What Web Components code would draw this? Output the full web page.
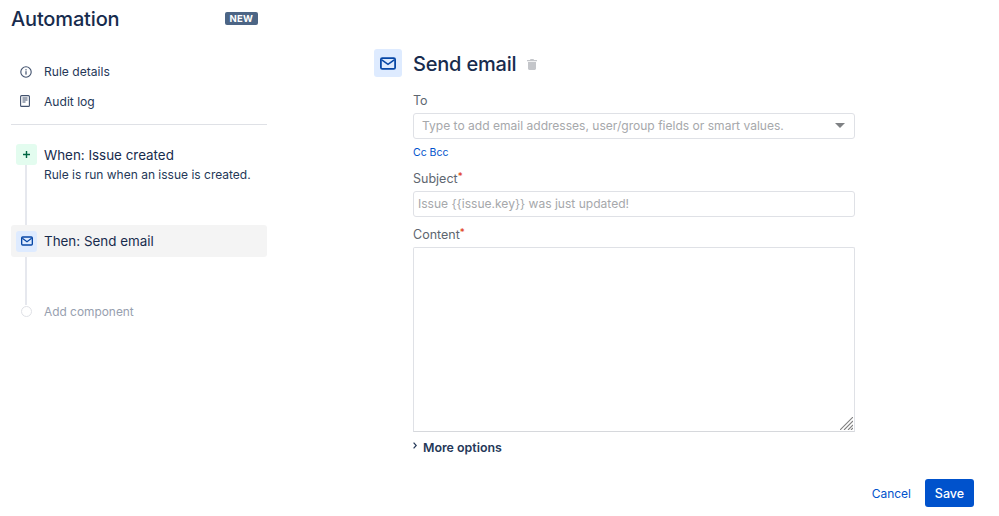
<!DOCTYPE html>
<html>
<head>
<meta charset="utf-8">
<title>Automation</title>
<style>
  html, body { margin: 0; background: #fff; }
  body { font-family: Inter, "Noto Sans", sans-serif; color: #172b4d; }
</style>
</head>
<body>
<rule-editor>
  <rule-sidebar slot="side">
    <nav-link label="Rule details" icon="info"></nav-link>
    <nav-link label="Audit log" icon="doc"></nav-link>
    <rule-step slot="steps" kind="trigger" title="When: Issue created" desc="Rule is run when an issue is created."></rule-step>
    <rule-step slot="steps" kind="action" title="Then: Send email" selected></rule-step>
    <rule-step slot="steps" kind="add" title="Add component"></rule-step>
  </rule-sidebar>
  <email-form slot="main"></email-form>
</rule-editor>

<script>
const ICONS = {
  mail: '<svg viewBox="0 0 18 14" width="100%" height="100%"><rect x="1" y="1" width="16" height="12" rx="1.6" fill="none" stroke="#0747a6" stroke-width="2"/><path d="M2 3l7 5 7-5" fill="none" stroke="#0747a6" stroke-width="1.8"/></svg>',
  info: '<svg viewBox="0 0 12 12" width="12" height="12"><circle cx="6" cy="6" r="5.2" fill="none" stroke="#42526e" stroke-width="1.1"/><rect x="5.4" y="5.2" width="1.2" height="3.4" fill="#42526e"/><rect x="5.4" y="3.2" width="1.2" height="1.2" fill="#42526e"/></svg>',
  doc: '<svg viewBox="0 0 10 12" width="10" height="12"><rect x=".6" y=".6" width="8.8" height="10.8" rx="1" fill="none" stroke="#42526e" stroke-width="1.1"/><path d="M2.5 3h5M2.5 5h5M2.5 7h3" stroke="#42526e" stroke-width="1.1"/></svg>',
  plus: '<svg viewBox="0 0 9 9" width="9" height="9"><path d="M4.5 1v7M1 4.5h7" stroke="#006644" stroke-width="1.4"/></svg>',
  trash: '<svg viewBox="0 0 10 12" width="10" height="12"><path d="M3.5 1h3l.5 1h3v1.2H0V2h3zM1 4h8v6.6c0 .8-.6 1.4-1.4 1.4H2.4C1.6 12 1 11.4 1 10.6z" fill="#c4c6ca"/></svg>'
};

class RuleEditor extends HTMLElement {
  constructor() {
    super();
    this.attachShadow({ mode: 'open' });
    this.shadowRoot.innerHTML = `
      <style>
        :host { display: flex; width: 999px; height: 516px; overflow: hidden; box-sizing: border-box; padding-left: 11px; }
        .side { flex: 0 0 256px; }
        .main { flex: 1; padding-left: 107px; min-width: 0; }
      </style>
      <div class="side"><slot name="side"></slot></div>
      <div class="main"><slot name="main"></slot></div>
    `;
  }
}

class RuleSidebar extends HTMLElement {
  constructor() {
    super();
    this.attachShadow({ mode: 'open' });
    this.shadowRoot.innerHTML = `
      <style>
        :host { display: block; }
        header { display: flex; justify-content: space-between; align-items: center; height: 38px; }
        h1 { margin: 0; font-size: 20px; font-weight: 500; letter-spacing: -0.15px; color: #172b4d; }
        .badge { margin-right: 9px; margin-top: -2px; background: #4c6585; color: #fff; font-size: 9.5px; font-weight: 700; line-height: 13px; height: 13px; padding: 0 5px; border-radius: 2px; letter-spacing: .2px; }
        .links { padding-top: 19px; padding-bottom: 8px; border-bottom: 1px solid #dfe1e6; }
        .steps { position: relative; padding-top: 19px; }
        .rail { position: absolute; left: 14px; top: 30px; height: 150px; width: 2px; background: #e6e8ee; }
      </style>
      <header><h1>Automation</h1><span class="badge">NEW</span></header>
      <div class="links"><slot></slot></div>
      <div class="steps"><div class="rail"></div><slot name="steps"></slot></div>
    `;
  }
}

class NavLink extends HTMLElement {
  constructor() {
    super();
    this.attachShadow({ mode: 'open' });
    this.shadowRoot.innerHTML = `
      <style>
        :host { display: flex; align-items: center; height: 29.5px; font-size: 12.1px; color: #253858; }
        .icon { width: 33px; padding-left: 9px; box-sizing: border-box; display: flex; }
      </style>
      <span class="icon"></span><span class="text"></span>
    `;
  }
  connectedCallback() {
    this.shadowRoot.querySelector('.icon').innerHTML = ICONS[this.getAttribute('icon')] || '';
    this.shadowRoot.querySelector('.text').textContent = this.getAttribute('label') || '';
  }
}

class RuleStep extends HTMLElement {
  constructor() {
    super();
    this.attachShadow({ mode: 'open' });
    this.shadowRoot.innerHTML = `
      <style>
        :host { display: flex; position: relative; box-sizing: border-box; border-radius: 3px; font-size: 13.4px; color: #172b4d; }
        :host([kind="trigger"]) { height: 81px; }
        :host([kind="trigger"]) .copy { padding-top: 1px; }
        :host([kind="action"]) { height: 32px; align-items: center; margin-bottom: 44px; }
        :host([selected]) { background: #f4f4f4; }
        :host([kind="add"]) { height: 20px; align-items: center; color: #97a0af; font-size: 11.9px; }
        .icon { flex: 0 0 21px; height: 21px; margin: 0 7px 0 5px; border-radius: 3px; display: flex; align-items: center; justify-content: center; position: relative; }
        :host([kind="trigger"]) .icon { background: #e3fcef; }
        :host([kind="action"]) .icon { background: #deebff; }
        :host([kind="action"]) .icon svg { width: 12px; height: 10px; }
        :host([kind="add"]) .icon::after { content: ''; width: 9px; height: 9px; border: 1px solid #dfe1e6; border-radius: 50%; background: #fff; }
        .title { line-height: 21px; }
        .desc { font-size: 12px; color: #253858; line-height: 17px; }
      </style>
      <span class="icon"></span>
      <div class="copy"><div class="title"></div><div class="desc"></div></div>
    `;
  }
  connectedCallback() {
    const kind = this.getAttribute('kind');
    const icon = this.shadowRoot.querySelector('.icon');
    if (kind === 'trigger') icon.innerHTML = ICONS.plus;
    if (kind === 'action') icon.innerHTML = ICONS.mail;
    this.shadowRoot.querySelector('.title').textContent = this.getAttribute('title') || '';
    const desc = this.shadowRoot.querySelector('.desc');
    if (this.getAttribute('desc')) desc.textContent = this.getAttribute('desc');
    else desc.remove();
  }
}

class FormField extends HTMLElement {
  constructor() {
    super();
    this.attachShadow({ mode: 'open' });
    this.shadowRoot.innerHTML = `
      <style>
        :host { display: block; }
        label { display: block; font-size: 12.5px; line-height: 16px; color: #5e6670; padding-top: 1px; margin-bottom: 4px; }
        .req { color: #de350b; font-size: 10px; vertical-align: 3px; line-height: 0; display: none; }
        :host([required]) .req { display: inline; }
      </style>
      <label><span class="text"></span><span class="req">*</span></label>
      <slot></slot>
    `;
  }
  connectedCallback() {
    this.shadowRoot.querySelector('.text').textContent = this.getAttribute('label') || '';
  }
}

class TextBox extends HTMLElement {
  constructor() {
    super();
    this.attachShadow({ mode: 'open' });
    this.shadowRoot.innerHTML = `
      <style>
        :host { display: flex; align-items: center; justify-content: space-between; box-sizing: border-box; height: 26px; border: 1px solid #dfe1e6; border-radius: 3px; padding: 0 9px 2px 4px; font-size: 12.05px; color: #a6a8ab; background: #fff; }
        :host([select]) { padding-left: 8px; padding-right: 9px; }
        .caret { display: none; width: 0; height: 0; border: 5px solid transparent; border-top: 5px solid #7f8184; border-bottom: 0; }
        :host([select]) .caret { display: block; }
      </style>
      <span class="ph"></span><span class="caret"></span>
    `;
  }
  connectedCallback() {
    this.shadowRoot.querySelector('.ph').textContent = this.getAttribute('placeholder') || '';
  }
}

class TextArea extends HTMLElement {
  constructor() {
    super();
    this.attachShadow({ mode: 'open' });
    this.shadowRoot.innerHTML = `
      <style>
        :host { display: flex; justify-content: flex-end; align-items: flex-end; box-sizing: border-box; height: 185px; border: 1px solid #dfe1e6; border-bottom-color: #d6d8dc; border-radius: 2px 2px 0 0; background: #fff; }
        svg { display: block; margin: 0 1px 1px 0; }
      </style>
      <svg width="13" height="13" viewBox="0 0 13 13"><path d="M0 13L13 0M4 13L13 4M8 13l5-5M11 13l2-2" stroke="#808080" stroke-width="1.1"/></svg>
    `;
  }
}

class EmailForm extends HTMLElement {
  constructor() {
    super();
    this.attachShadow({ mode: 'open' });
    this.shadowRoot.innerHTML = `
      <style>
        :host { display: block; padding-top: 49px; }
        .head { display: flex; align-items: center; height: 28px; }
        .badge { width: 28px; height: 28px; background: #deebff; border-radius: 3px; display: flex; align-items: center; justify-content: center; margin-right: 11px; }
        .badge svg { width: 16px; height: 13px; }
        h2 { margin: 1px 11px 0 0; font-size: 20px; font-weight: 500; letter-spacing: -0.2px; color: #172b4d; }
        .trash { display: flex; margin-top: 2px; }
        .body { width: 442px; margin-left: 39px; padding-top: 15px; }
        .cc { color: #0052cc; font-size: 10.5px; line-height: 14px; padding: 7px 0 10px; }
        .gap { height: 9px; }
        .more { display: flex; align-items: center; gap: 6px; font-size: 12.4px; font-weight: 600; color: #253858; margin-top: 7px; height: 16px; }
        .more svg { margin-top: -3px; }
        .actions { display: flex; justify-content: flex-end; align-items: center; gap: 14px; width: 600px; margin-top: 24px; }
        .cancel { color: #0052cc; font-size: 12px; }
        .save { background: #0052cc; color: #fff; font-size: 12.5px; font-weight: 500; height: 28px; width: 49px; border-radius: 3px; display: flex; align-items: center; justify-content: center; }
      </style>
      <div class="head">
        <span class="badge">${ICONS.mail}</span>
        <h2>Send email</h2>
        <span class="trash">${ICONS.trash}</span>
      </div>
      <div class="body">
        <form-field label="To"><text-box select placeholder="Type to add email addresses, user/group fields or smart values."></text-box></form-field>
        <div class="cc">Cc Bcc</div>
        <form-field label="Subject" required><text-box placeholder="Issue {{issue.key}} was just updated!"></text-box></form-field>
        <div class="gap"></div>
        <form-field label="Content" required><text-area></text-area></form-field>
        <div class="more"><svg width="4" height="7" viewBox="0 0 4 7"><path d="M.6.6L3.2 3.5.6 6.4" fill="none" stroke="#253858" stroke-width="1.2"/></svg><span>More options</span></div>
      </div>
      <div class="actions"><span class="cancel">Cancel</span><span class="save">Save</span></div>
    `;
  }
}

customElements.define('rule-editor', RuleEditor);
customElements.define('rule-sidebar', RuleSidebar);
customElements.define('nav-link', NavLink);
customElements.define('rule-step', RuleStep);
customElements.define('form-field', FormField);
customElements.define('text-box', TextBox);
customElements.define('text-area', TextArea);
customElements.define('email-form', EmailForm);
</script>
</body>
</html>
